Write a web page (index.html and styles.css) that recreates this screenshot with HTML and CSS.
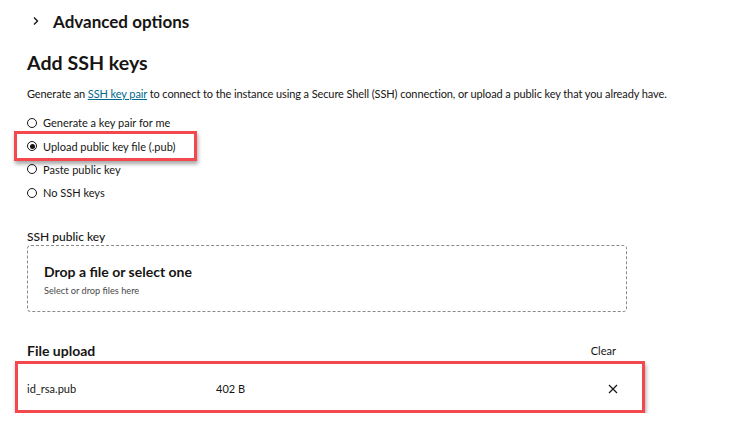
FILE: index.html
```html
<!DOCTYPE html>
<html>
<head>
<meta charset="utf-8">
<link rel="stylesheet" href="styles.css">
</head>
<body>
<div class="page">
  <div class="advanced">
    <svg class="chev" width="8" height="10" viewBox="0 0 8 10"><path d="M2 1.5 L5.5 5 L2 8.5" fill="none" stroke="#161513" stroke-width="1.4"/></svg>
    <span>Advanced options</span>
  </div>
  <h2 class="title">Add SSH keys</h2>
  <p class="desc">Generate an <a href="#" class="link">SSH key pair</a> to connect to the instance using a Secure Shell (SSH) connection, or upload a public key that you already have.</p>
  <div class="radios">
    <label class="radio"><span class="dot"></span>Generate a key pair for me</label>
    <label class="radio checked highlight"><span class="dot"></span>Upload public key file (.pub)</label>
    <label class="radio"><span class="dot"></span>Paste public key</label>
    <label class="radio"><span class="dot"></span>No SSH keys</label>
  </div>
  <div class="field-label">SSH public key</div>
  <div class="dropzone">
    <div class="drop-title">Drop a file or select one</div>
    <div class="drop-sub">Select or drop files here</div>
  </div>
  <div class="upload-head">
    <span class="upload-title">File upload</span>
    <span class="clear">Clear</span>
  </div>
  <div class="file-row">
    <span class="fname">id_rsa.pub</span>
    <span class="fsize">402 B</span>
    <svg class="x" width="10" height="10" viewBox="0 0 10 10"><path d="M1 1 L9 9 M9 1 L1 9" stroke="#161513" stroke-width="1.2"/></svg>
  </div>
</div>
</body>
</html>
```
FILE: styles.css
```css
* { box-sizing: border-box; }
body {
  margin: 0;
  background: #fff;
  color: #161513;
  font-family: "Lato", "Noto Sans", sans-serif;
}
.page {
  padding: 10px 0 0 27px;
  width: 736px;
}
.advanced {
  display: flex;
  align-items: center;
  height: 22px;
  font-size: 17px;
  font-weight: 700;
}
.chev { margin-left: 5px; margin-right: 13px; }
.title {
  margin: 19px 0 0;
  font-size: 19.6px;
  font-weight: 700;
  line-height: 24px;
}
.desc {
  margin: 11px 0 0;
  font-size: 11px;
  letter-spacing: -0.1px;
  line-height: 16px;
  white-space: nowrap;
}
.link { color: #00688c; text-decoration: underline; }
.radios {
  margin-top: 9px;
  display: flex;
  flex-direction: column;
  align-items: flex-start;
}
.radio {
  display: flex;
  align-items: center;
  height: 23.4px;
  font-size: 11px;
  position: relative;
}
.dot {
  width: 10px;
  height: 10px;
  border: 1px solid #161513;
  border-radius: 50%;
  margin-right: 6px;
  position: relative;
}
.checked .dot::after {
  content: "";
  position: absolute;
  left: 1.5px; top: 1.5px;
  width: 5px; height: 5px;
  border-radius: 50%;
  background: #161513;
}
.highlight::before {
  content: "";
  position: absolute;
  left: -13px; right: -22px;
  top: -3px; bottom: -3px;
  border: 3px solid #f2484e;
  box-shadow: 1px 3px 4px rgba(0,0,0,0.35);
}
.field-label {
  margin-top: 25px;
  font-size: 12px;
  font-weight: 500;
  line-height: 14px;
}
.dropzone {
  margin-top: 1px;
  width: 600px;
  height: 67px;
  border: 1px dashed #8a8a8a;
  border-radius: 4px;
  padding: 17px 16px;
}
.drop-title {
  font-size: 14px;
  font-weight: 700;
  line-height: 18px;
}
.drop-sub {
  font-size: 9.2px;
  color: #4a4a4a;
  margin-top: 4px;
}
.upload-head {
  margin-top: 30px;
  width: 589px;
  display: flex;
  justify-content: space-between;
  align-items: center;
}
.upload-title { font-size: 14px; font-weight: 700; }
.clear { font-size: 11px; }
.file-row {
  margin: 2px 0 0 -12px;
  width: 630px;
  height: 52px;
  border: 3px solid #f2484e;
  box-shadow: 1px 3px 4px rgba(0,0,0,0.35);
  display: flex;
  align-items: center;
  padding: 4px 0 0 9px;
  font-size: 11px;
}
.fname { width: 189px; }
.fsize { flex: 1; }
.x { margin-right: 24px; }
```
